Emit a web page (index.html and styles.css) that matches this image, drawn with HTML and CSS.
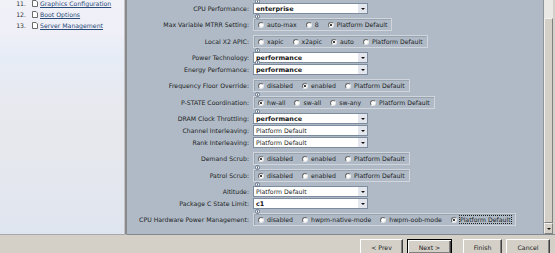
FILE: index.html
```html
<!DOCTYPE html>
<html>
<head>
<meta charset="utf-8">
<link rel="stylesheet" href="styles.css">
</head>
<body>
<div class="top">
  <aside class="nav">
    <ul class="steps">
      <li><span class="num">11.</span><svg class="doc" viewBox="0 0 6 7"><path d="M0.5 0.5H4L5.5 2V6.5H0.5Z" fill="#fff" stroke="#6a6a6a" stroke-width="1"/></svg><a class="link">Graphics Configuration</a></li>
      <li><span class="num">12.</span><svg class="doc" viewBox="0 0 6 7"><path d="M0.5 0.5H4L5.5 2V6.5H0.5Z" fill="#fff" stroke="#6a6a6a" stroke-width="1"/></svg><a class="link">Boot Options</a></li>
      <li><span class="num">13.</span><svg class="doc" viewBox="0 0 6 7"><path d="M0.5 0.5H4L5.5 2V6.5H0.5Z" fill="#fff" stroke="#6a6a6a" stroke-width="1"/></svg><a class="link">Server Management</a></li>
    </ul>
  </aside>
  <div class="divider"></div>
  <main class="content">
    <div class="form">
      <div class="row sel"><span class="lbl">CPU Performance:</span><div class="ctl"><svg class="info" viewBox="0 0 5 5"><circle cx="2.5" cy="2.5" r="2" fill="#fff" stroke="#4d5f78" stroke-width="0.8"/><rect x="2.1" y="2" width="0.8" height="1.7" fill="#2c3e58"/><rect x="2.1" y="1" width="0.8" height="0.6" fill="#2c3e58"/></svg><div class="select strong"><span class="val">enterprise</span><span class="arrow"></span></div></div></div>

      <div class="row rad"><span class="lbl">Max Variable MTRR Setting:</span><div class="ctl"><svg class="info" viewBox="0 0 5 5"><circle cx="2.5" cy="2.5" r="2" fill="#fff" stroke="#4d5f78" stroke-width="0.8"/><rect x="2.1" y="2" width="0.8" height="1.7" fill="#2c3e58"/><rect x="2.1" y="1" width="0.8" height="0.6" fill="#2c3e58"/></svg><div class="group"><span class="opt"><span class="radio"></span>auto-max</span><span class="opt"><span class="radio"></span>8</span><span class="opt"><span class="radio on"></span>Platform Default</span></div></div></div>

      <div class="row rad"><span class="lbl">Local X2 APIC:</span><div class="ctl"><div class="group"><span class="opt"><span class="radio"></span>xapic</span><span class="opt"><span class="radio"></span>x2apic</span><span class="opt"><span class="radio on"></span>auto</span><span class="opt"><span class="radio"></span>Platform Default</span></div></div></div>

      <div class="row sel"><span class="lbl">Power Technology:</span><div class="ctl"><svg class="info" viewBox="0 0 5 5"><circle cx="2.5" cy="2.5" r="2" fill="#fff" stroke="#4d5f78" stroke-width="0.8"/><rect x="2.1" y="2" width="0.8" height="1.7" fill="#2c3e58"/><rect x="2.1" y="1" width="0.8" height="0.6" fill="#2c3e58"/></svg><div class="select strong"><span class="val">performance</span><span class="arrow"></span></div></div></div>

      <div class="row sel"><span class="lbl">Energy Performance:</span><div class="ctl"><svg class="info" viewBox="0 0 5 5"><circle cx="2.5" cy="2.5" r="2" fill="#fff" stroke="#4d5f78" stroke-width="0.8"/><rect x="2.1" y="2" width="0.8" height="1.7" fill="#2c3e58"/><rect x="2.1" y="1" width="0.8" height="0.6" fill="#2c3e58"/></svg><div class="select strong"><span class="val">performance</span><span class="arrow"></span></div></div></div>

      <div class="row rad"><span class="lbl">Frequency Floor Override:</span><div class="ctl"><div class="group"><span class="opt"><span class="radio"></span>disabled</span><span class="opt"><span class="radio on"></span>enabled</span><span class="opt"><span class="radio"></span>Platform Default</span></div></div></div>

      <div class="row rad"><span class="lbl">P-STATE Coordination:</span><div class="ctl"><svg class="info" viewBox="0 0 5 5"><circle cx="2.5" cy="2.5" r="2" fill="#fff" stroke="#4d5f78" stroke-width="0.8"/><rect x="2.1" y="2" width="0.8" height="1.7" fill="#2c3e58"/><rect x="2.1" y="1" width="0.8" height="0.6" fill="#2c3e58"/></svg><div class="group"><span class="opt"><span class="radio on"></span>hw-all</span><span class="opt"><span class="radio"></span>sw-all</span><span class="opt"><span class="radio"></span>sw-any</span><span class="opt"><span class="radio"></span>Platform Default</span></div></div></div>

      <div class="row sel"><span class="lbl">DRAM Clock Throttling:</span><div class="ctl"><svg class="info" viewBox="0 0 5 5"><circle cx="2.5" cy="2.5" r="2" fill="#fff" stroke="#4d5f78" stroke-width="0.8"/><rect x="2.1" y="2" width="0.8" height="1.7" fill="#2c3e58"/><rect x="2.1" y="1" width="0.8" height="0.6" fill="#2c3e58"/></svg><div class="select strong"><span class="val">performance</span><span class="arrow"></span></div></div></div>

      <div class="row sel"><span class="lbl">Channel Interleaving:</span><div class="ctl"><div class="select"><span class="val">Platform Default</span><span class="arrow"></span></div></div></div>

      <div class="row sel"><span class="lbl">Rank Interleaving:</span><div class="ctl"><div class="select"><span class="val">Platform Default</span><span class="arrow"></span></div></div></div>

      <div class="row rad"><span class="lbl">Demand Scrub:</span><div class="ctl"><div class="group"><span class="opt"><span class="radio on"></span>disabled</span><span class="opt"><span class="radio"></span>enabled</span><span class="opt"><span class="radio"></span>Platform Default</span></div></div></div>

      <div class="row rad"><span class="lbl">Patrol Scrub:</span><div class="ctl"><svg class="info" viewBox="0 0 5 5"><circle cx="2.5" cy="2.5" r="2" fill="#fff" stroke="#4d5f78" stroke-width="0.8"/><rect x="2.1" y="2" width="0.8" height="1.7" fill="#2c3e58"/><rect x="2.1" y="1" width="0.8" height="0.6" fill="#2c3e58"/></svg><div class="group"><span class="opt"><span class="radio on"></span>disabled</span><span class="opt"><span class="radio"></span>enabled</span><span class="opt"><span class="radio"></span>Platform Default</span></div></div></div>

      <div class="row sel"><span class="lbl">Altitude:</span><div class="ctl"><svg class="info" viewBox="0 0 5 5"><circle cx="2.5" cy="2.5" r="2" fill="#fff" stroke="#4d5f78" stroke-width="0.8"/><rect x="2.1" y="2" width="0.8" height="1.7" fill="#2c3e58"/><rect x="2.1" y="1" width="0.8" height="0.6" fill="#2c3e58"/></svg><div class="select"><span class="val">Platform Default</span><span class="arrow"></span></div></div></div>

      <div class="row sel"><span class="lbl">Package C State Limit:</span><div class="ctl"><div class="select strong"><span class="val">c1</span><span class="arrow"></span></div></div></div>

      <div class="row rad"><span class="lbl">CPU Hardware Power Management:</span><div class="ctl"><svg class="info" viewBox="0 0 5 5"><circle cx="2.5" cy="2.5" r="2" fill="#fff" stroke="#4d5f78" stroke-width="0.8"/><rect x="2.1" y="2" width="0.8" height="1.7" fill="#2c3e58"/><rect x="2.1" y="1" width="0.8" height="0.6" fill="#2c3e58"/></svg><div class="group"><span class="opt"><span class="radio"></span>disabled</span><span class="opt"><span class="radio"></span>hwpm-native-mode</span><span class="opt"><span class="radio"></span>hwpm-oob-mode</span><span class="opt"><span class="radio on"></span><span class="focus">Platform Default</span></span></div></div></div>
    </div>
    <div class="vscroll">
      <div class="track"></div>
      <div class="thumb"></div>
      <div class="sbtn"></div>
    </div>
    <div class="edge"></div>
  </main>
</div>
<footer class="bar">
  <span class="btn prev">&lt; Prev</span>
  <span class="btn next">Next &gt;</span>
  <span class="btn finish">Finish</span>
  <span class="btn cancel">Cancel</span>
</footer>
</body>
</html>
```
FILE: styles.css
```css
html, body {
  margin: 0;
  padding: 0;
}
body {
  width: 555px;
  height: 253px;
  overflow: hidden;
  background: #d4d0c8;
  font-family: "DejaVu Sans", "Liberation Sans", sans-serif;
  font-size: 6.2px;
  color: #1e1e1e;
}

.top {
  display: flex;
  height: 235px;
}

/* left navigation */
.nav {
  width: 124px;
  box-sizing: border-box;
  background: linear-gradient(#f1f1f8 0%, #eeeff7 15%, #e6ecf6 25%, #e8e9ef 45%, #e6e8ee 65%, #dfe5ef 100%);
  border-bottom: 1px solid #a6a8ad;
  overflow: hidden;
}
.steps {
  list-style: none;
  margin: -2px 0 0;
  padding: 0;
}
.steps li {
  display: flex;
  align-items: center;
  height: 11px;
}
.num {
  width: 27px;
  box-sizing: border-box;
  padding-right: 1px;
  text-align: right;
  color: #333;
}
.doc {
  width: 6px;
  height: 7px;
  margin: 0 2px 0 5px;
}
.link {
  color: #2a4a78;
  text-decoration: underline;
  white-space: nowrap;
}

.divider {
  width: 3px;
  box-sizing: border-box;
  background: #8a8a8a;
  border-left: 1px solid #c4c4c8;
  border-bottom: 1px solid #a6a8ad;
}

/* main form */
.content {
  flex: 1;
  display: flex;
  background: #afbac6;
  border-bottom: 1px solid #7f878f;
}
.form {
  flex: 1;
  padding-top: 2px;
}
.row {
  display: flex;
  align-items: center;
}
.row.sel {
  height: 11px;
  margin: 1px 0;
}
.row.rad {
  height: 13px;
  margin: 4px 0;
}
.lbl {
  flex: 0 0 126px;
  box-sizing: border-box;
  padding-right: 4px;
  text-align: right;
  white-space: nowrap;
}
.ctl {
  position: relative;
  height: 100%;
}
.info {
  position: absolute;
  left: 2px;
  top: -4px;
  width: 5px;
  height: 5px;
  z-index: 2;
}

.select {
  width: 115px;
  height: 11px;
  box-sizing: border-box;
  background: #fff;
  border: 1px solid #7c8c9e;
  display: flex;
  align-items: center;
  padding-left: 2px;
}
.select .val {
  flex: 1;
  white-space: nowrap;
}
.select.strong .val {
  font-weight: bold;
  font-size: 6.4px;
  color: #111;
}
.arrow {
  width: 9px;
  height: 9px;
  background: #e3e7ed;
  display: flex;
  align-items: center;
  justify-content: center;
}
.arrow::before {
  content: "";
  border-left: 2px solid transparent;
  border-right: 2px solid transparent;
  border-top: 2px solid #111;
}

.group {
  height: 13px;
  box-sizing: border-box;
  border: 1px solid #d0d6dc;
  box-shadow: inset 1px 1px 0 #97a3af;
  display: inline-flex;
  align-items: center;
  padding: 0 4px;
  gap: 9px;
}
.opt {
  display: flex;
  align-items: center;
  gap: 3px;
  white-space: nowrap;
}
.radio {
  width: 6px;
  height: 6px;
  box-sizing: border-box;
  border-radius: 50%;
  background: #fff;
  border: 1px solid;
  border-color: #6a6a6a #e6e6e6 #e6e6e6 #6a6a6a;
  display: flex;
  align-items: center;
  justify-content: center;
}
.radio.on::after {
  content: "";
  width: 2px;
  height: 2px;
  border-radius: 50%;
  background: #000;
}
.focus {
  outline: 1px dotted #222;
  outline-offset: 0;
}

/* scrollbar */
.vscroll {
  width: 10px;
  display: flex;
  flex-direction: column;
  border-left: 1px solid #8d949b;
  box-sizing: border-box;
}
.track {
  height: 18px;
  background: #ebe9e5;
}
.thumb {
  flex: 1;
  background: #d4d0c8;
  border: 1px solid;
  border-color: #f4f2ee #808080 #808080 #f4f2ee;
}
.sbtn {
  height: 9px;
  background: #d4d0c8;
  border: 1px solid;
  border-color: #f4f2ee #808080 #808080 #f4f2ee;
  display: flex;
  align-items: center;
  justify-content: center;
}
.sbtn::before {
  content: "";
  border-left: 2px solid transparent;
  border-right: 2px solid transparent;
  border-top: 2px solid #111;
}
.edge {
  width: 2px;
  background: #d4d0c8;
}

/* bottom button bar */
.bar {
  height: 18px;
  box-sizing: border-box;
  display: flex;
  justify-content: flex-end;
  align-items: flex-start;
  gap: 4px;
  padding: 4px 5px 0 0;
}
.btn {
  height: 16px;
  box-sizing: border-box;
  background: #d4d0c8;
  border: 1px solid;
  border-color: #ffffff #404040 #404040 #ffffff;
  box-shadow: inset -1px -1px 0 #808080;
  display: flex;
  align-items: center;
  justify-content: center;
  color: #222;
  white-space: nowrap;
}
.prev { width: 43px; }
.next {
  width: 45px;
  margin-right: 7px;
  border-color: #000;
  box-shadow: inset 1px 1px 0 #fff, inset -1px -1px 0 #404040, inset -2px -2px 0 #808080;
}
.finish { width: 39px; }
.cancel { width: 44px; }
```
